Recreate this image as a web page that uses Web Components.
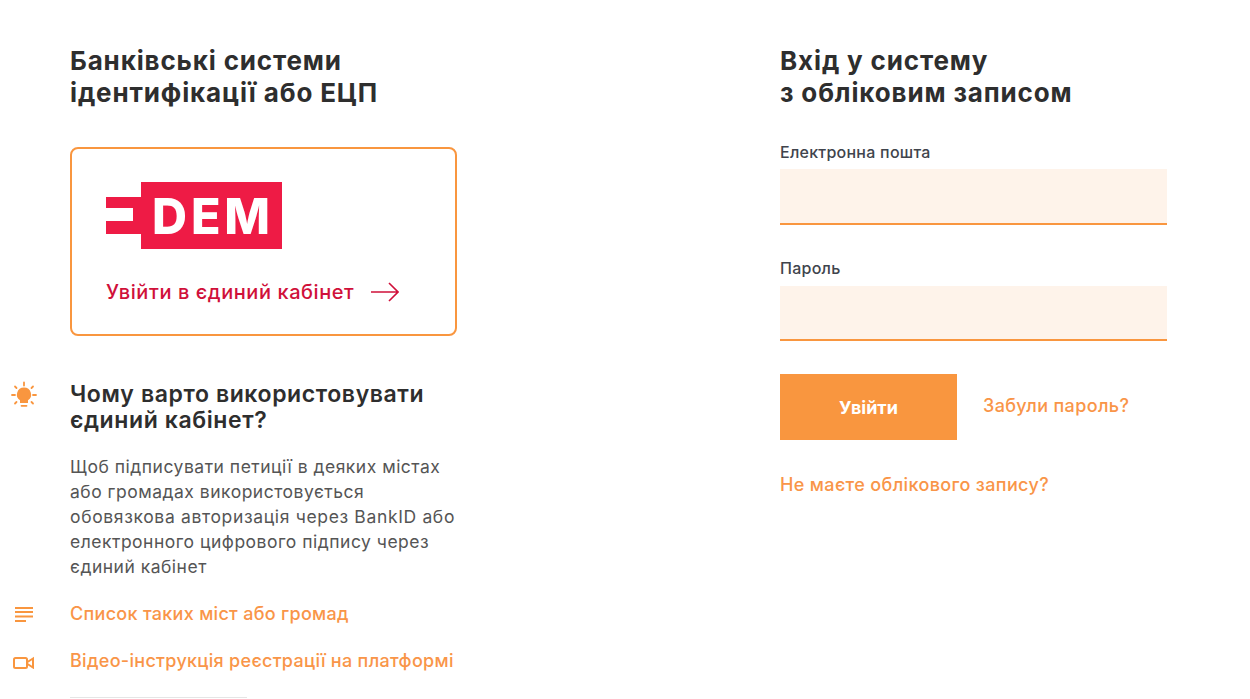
<!DOCTYPE html>
<html lang="uk">
<head>
<meta charset="utf-8">
<title>Вхід</title>
<style>
  html, body { margin: 0; padding: 0; background: #fff; }
  body { font-family: Inter, "Noto Sans", "Liberation Sans", sans-serif; color: #2e2e2e; overflow: hidden; }
</style>
</head>
<body>
<login-page>
  <section slot="left">
    <page-heading>Банківські системи<br>ідентифікації або ЕЦП</page-heading>
    <dem-card>Увійти в єдиний кабінет</dem-card>
    <why-block heading="Чому варто використовувати<br>єдиний кабінет?">
      Щоб підписувати петиції в деяких містах<br>або громадах використовується<br><span style="letter-spacing: 0.65px">обовязкова авторизація через BankID або</span><br>електронного цифрового підпису через<br>єдиний кабінет
    </why-block>
    <icon-link icon="list">Список таких міст або громад</icon-link>
    <icon-link icon="video">Відео-інструкція реєстрації на платформі</icon-link>
    <short-rule></short-rule>
  </section>
  <section slot="right">
    <page-heading>Вхід у систему<br>з обліковим записом</page-heading>
    <form-field label="Електронна пошта"></form-field>
    <form-field label="Пароль"></form-field>
    <login-actions></login-actions>
  </section>
</login-page>

<script>
  const ORANGE = '#f9963f';
  const LINK = '#f99548';

  function makeTemplate( html ) {
    const template = document.createElement( 'template' );
    template.innerHTML = html;
    return template;
  }

  class Base extends HTMLElement {
    constructor() {
      super();
      this.attachShadow( {mode: 'open'} );
      this.shadowRoot.appendChild( this.constructor.template.content.cloneNode( true ) );
    }
  }

  class LoginPage extends Base {
    static template = makeTemplate( /* template */ `
      <style>
        :host {
          box-sizing: border-box;
          display: grid;
          grid-template-columns: 387px 387px;
          column-gap: 323px;
          height: 699px;
          overflow: hidden;
          padding: 45px 0 0 70px;
        }
      </style>
      <div><slot name="left"></slot></div>
      <div><slot name="right"></slot></div>
    ` );
  }

  class PageHeading extends Base {
    static template = makeTemplate( /* template */ `
      <style>
        :host {
          color: #2e2e2e;
          display: block;
          font-size: 26px;
          font-weight: 700;
          letter-spacing: 0.85px;
          line-height: 32px;
          white-space: nowrap;
        }
      </style>
      <slot></slot>
    ` );
  }

  class DemCard extends Base {
    static template = makeTemplate( /* template */ `
      <style>
        :host {
          border: 2px solid ${ORANGE};
          border-radius: 8px;
          box-sizing: border-box;
          display: block;
          height: 189px;
          margin-top: 38px;
          padding: 33px 0 0 34px;
        }
        svg { display: block; }
        .logo-text {
          fill: #fff;
          font-family: Inter, "Noto Sans", sans-serif;
          font-size: 50px;
          font-weight: 800;
          letter-spacing: 4px;
        }
        .enter {
          align-items: center;
          color: #d0103a;
          display: flex;
          font-size: 20px;
          font-weight: 500;
          gap: 17px;
          letter-spacing: 0.57px;
          line-height: 24px;
          margin-top: 31px;
        }
      </style>
      <svg width="176" height="67" viewBox="0 0 176 67">
        <path fill="#ee1b45" d="M35 0H176V67H35V52H0V39H27V26H0V15H35Z"/>
        <text class="logo-text" x="46" y="52" textLength="122" lengthAdjust="spacingAndGlyphs">DEM</text>
      </svg>
      <div class="enter">
        <span><slot></slot></span>
        <svg width="28" height="20" viewBox="0 0 28 20" fill="none" stroke="#d0103a" stroke-width="1.6">
          <path d="M0 10H27M18 1L27 10L18 19"/>
        </svg>
      </div>
    ` );
  }

  class WhyBlock extends Base {
    static template = makeTemplate( /* template */ `
      <style>
        :host {
          display: block;
          margin-top: 45px;
          position: relative;
        }
        svg {
          left: -60px;
          position: absolute;
          top: 0;
        }
        h2 {
          color: #2e2e2e;
          font-size: 23px;
          font-weight: 600;
          letter-spacing: 0.6px;
          line-height: 26px;
          margin: 0 0 21px;
          white-space: nowrap;
        }
        .body {
          color: #555;
          font-size: 17.5px;
          letter-spacing: 0.5px;
          line-height: 25px;
          white-space: nowrap;
        }
      </style>
      <svg width="28" height="28" viewBox="0 0 28 28" fill="none" stroke="${ORANGE}" stroke-width="1.8" stroke-linecap="round">
        <path d="M14 1.500V4.500M2 14H5M23 14H26M5 5.500L6.500 7M23 5.500L21.500 7M5 22.500L6.500 21M23 22.500L21.500 21"/>
        <path fill="${ORANGE}" stroke="none" d="M14 6.500A7 7 0 0 1 18 19.300V22H10V19.300A7 7 0 0 1 14 6.500Z"/>
        <path d="M11.500 24.800H16.500"/>
      </svg>
      <h2></h2>
      <div class="body"><slot></slot></div>
    ` );

    connectedCallback() {
      this.shadowRoot.querySelector( 'h2' ).innerHTML = this.getAttribute( 'heading' );
    }
  }

  class IconLink extends Base {
    static icons = {
      list: '<path d="M2 2H20M2 6H20M2 10.500H20M2 15H13" stroke-width="2"/>',
      video: '<rect x="1" y="5" width="13" height="10" rx="1.500" stroke-width="2"/><path d="M14.500 9L20 5.500V14.500L14.500 11" stroke-width="2"/>'
    };

    static template = makeTemplate( /* template */ `
      <style>
        :host {
          color: ${LINK};
          display: block;
          font-size: 18px;
          font-weight: 500;
          letter-spacing: 0.3px;
          line-height: 24px;
          position: relative;
          white-space: nowrap;
        }
        svg {
          left: -57px;
          position: absolute;
          top: 4px;
        }
      </style>
      <svg width="21" height="16" viewBox="0 0 21 16" fill="none" stroke="${ORANGE}"></svg>
      <slot></slot>
    ` );

    connectedCallback() {
      this.shadowRoot.querySelector( 'svg' ).innerHTML = IconLink.icons[this.getAttribute( 'icon' )];
      this.style.marginTop = '23px';
    }
  }

  class ShortRule extends Base {
    static template = makeTemplate( /* template */ `
      <style>
        :host {
          background: #e5e5e5;
          display: block;
          height: 1px;
          margin-top: 24px;
          width: 177px;
        }
      </style>
    ` );
  }

  class FormField extends Base {
    static template = makeTemplate( /* template */ `
      <style>
        :host {
          display: block;
          margin-top: 34px;
        }
        label {
          color: #40444c;
          display: block;
          font-size: 16px;
          font-weight: 500;
          letter-spacing: 0.25px;
          line-height: 18px;
          margin-bottom: 8px;
        }
        :host( :last-of-type ) label { margin-bottom: 9px; }
        input {
          background: #fef3ea;
          border: 0;
          border-bottom: 2px solid ${ORANGE};
          border-radius: 0;
          box-sizing: border-box;
          display: block;
          height: 56px;
          outline: none;
          padding: 0 12px;
          width: 100%;
        }
        :host( :last-of-type ) input { height: 55px; }
      </style>
      <label></label>
      <input type="text">
    ` );

    connectedCallback() {
      this.shadowRoot.querySelector( 'label' ).textContent = this.getAttribute( 'label' );
    }
  }

  class LoginActions extends Base {
    static template = makeTemplate( /* template */ `
      <style>
        :host {
          display: block;
          margin-top: 33px;
        }
        .row {
          align-items: center;
          display: flex;
          gap: 26px;
        }
        button {
          background: ${ORANGE};
          border: 0;
          color: #fff;
          font: 700 18px Inter, "Noto Sans", sans-serif;
          height: 66px;
          padding: 0;
          width: 177px;
        }
        a {
          color: ${LINK};
          font-size: 18px;
          font-weight: 500;
          letter-spacing: 0.36px;
          line-height: 24px;
          text-decoration: none;
        }
        .row a { position: relative; top: -1px; }
        .register {
          display: block;
          margin-top: 33px;
        }
      </style>
      <div class="row">
        <button type="button">Увійти</button>
        <a href="#">Забули пароль?</a>
      </div>
      <a class="register" href="#">Не маєте облікового запису?</a>
    ` );
  }

  customElements.define( 'login-page', LoginPage );
  customElements.define( 'page-heading', PageHeading );
  customElements.define( 'dem-card', DemCard );
  customElements.define( 'why-block', WhyBlock );
  customElements.define( 'icon-link', IconLink );
  customElements.define( 'short-rule', ShortRule );
  customElements.define( 'form-field', FormField );
  customElements.define( 'login-actions', LoginActions );
</script>
</body>
</html>
